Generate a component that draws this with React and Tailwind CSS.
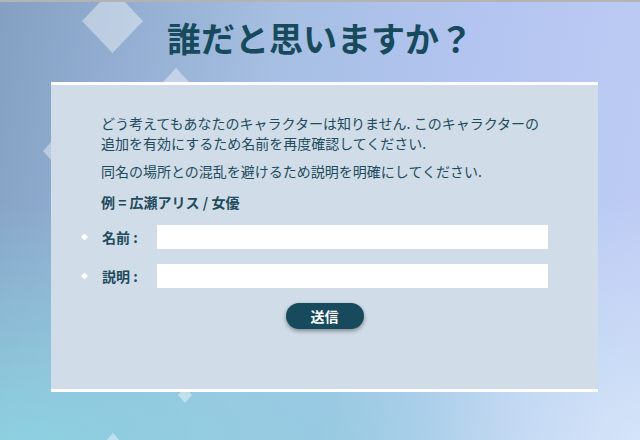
import React from 'react';

const Diamond = ({ className }) => (
  <div className={`absolute bg-white/40 [clip-path:polygon(50%_0,100%_50%,50%_100%,0_50%)] ${className}`} />
);

const Field = ({ label }) => (
  <div className="flex items-center">
    <div className="-ml-[20px] mr-[14px] h-[7px] w-[7px] bg-white [clip-path:polygon(50%_0,100%_50%,50%_100%,0_50%)]" />
    <label className="w-[55px] text-[14px] font-bold text-[#1f4b5c]">{label}</label>
    <input type="text" className="h-[24px] w-[392px] bg-white px-2 text-[14px] outline-none" />
  </div>
);

export default function App() {
  return (
    <div className="relative h-[440px] w-[640px] overflow-hidden border-t-2 border-[#b3b3b3] bg-[radial-gradient(ellipse_75%_55%_at_5%_100%,#8dd0e0_0%,rgba(141,208,224,0)_100%),radial-gradient(ellipse_50%_55%_at_100%_100%,#d4e4f9_0%,rgba(212,228,249,0)_100%),radial-gradient(ellipse_60%_45%_at_55%_100%,#9cc6e2_0%,rgba(156,198,226,0)_100%),linear-gradient(100deg,#83a0c3_0%,#a6bfe3_40%,#b4c5f1_70%,#bfcdf4_100%)] font-['Noto_Sans_CJK_JP','Noto_Sans',sans-serif]">

      {/* background shapes */}
      <Diamond className="left-[82px] top-[-13px] h-[64px] w-[61px]" />
      <Diamond className="left-[163px] top-[66px] h-[28px] w-[26px]" />
      <Diamond className="left-[43px] top-[140px] h-[18px] w-[16px]" />
      <Diamond className="left-[178px] top-[385px] h-[16px] w-[14px]" />
      <Diamond className="left-[106px] top-[431px] h-[16px] w-[14px]" />

      {/* Title */}
      <h1 className="relative pt-[16px] text-center text-[34px] font-bold leading-[40px] text-[#174a5c]">
        誰だと思いますか？
      </h1>

      {/* Panel */}
      <div className="relative mx-[51px] mt-[24px] h-[310px] w-[547px] border-y-[3px] border-white bg-[#d0dde9] px-[50px] pt-[28px]">
        <p className="text-[14px] leading-[20px] text-[#1f4b5c]">
          どう考えてもあなたのキャラクターは知りません. このキャラクターの追加を有効にするため名前を再度確認してください.
        </p>
        <p className="mt-[8px] text-[14px] leading-[20px] text-[#1f4b5c]">
          同名の場所との混乱を避けるため説明を明確にしてください.
        </p>
        <p className="mt-[11px] text-[14px] font-bold leading-[20px] text-[#1f4b5c]">
          例 = 広瀬アリス / 女優
        </p>

        <div className="mt-[13px] flex flex-col gap-[15px]">
          <Field label="名前 :" />
          <Field label="説明 :" />
        </div>

        <div className="mt-[15px] flex justify-center">
          <button className="h-[26px] w-[78px] rounded-full bg-[#164a5c] text-[14px] font-bold text-white shadow-[0_2px_4px_rgba(0,0,0,0.4)]">
            送信
          </button>
        </div>
      </div>
    </div>
  );
}
